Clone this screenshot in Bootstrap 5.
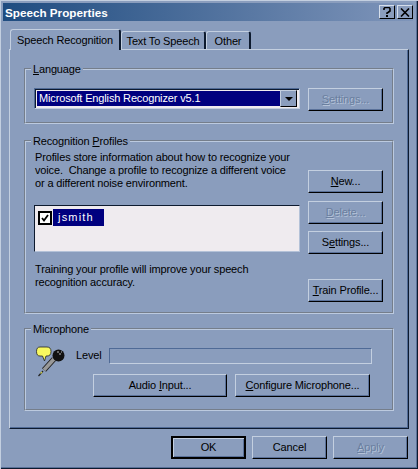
<!DOCTYPE html>
<html lang="en">
<head>
  <meta charset="UTF-8">
  <title>Speech Properties</title>
  <link href="https://cdn.jsdelivr.net/npm/bootstrap@5.3.0/dist/css/bootstrap.min.css" rel="stylesheet">
  <style>
    body {
      background: #8a9dbd;
      color: #000;
      font-family: "Liberation Sans", Arial, sans-serif;
      font-size: 11px;
      letter-spacing: -.15px;
      line-height: 13px;
      overflow: hidden;
    }
    .dlg-window {
      width: 418px;
      height: 469px;
      padding: 3px 5px 0 3px;
      background: #8a9dbd;
      box-shadow: inset 1px 1px 0 #c3cfe0, inset -1px -1px 0 #0d1a2e, inset -2px -2px 0 #5a7199;
    }
    .dlg-title {
      height: 18px;
      padding-left: 2px;
      background: linear-gradient(to right, #1f4c80, #7f95ba);
      color: #fff;
      font-size: 11.7px;
      letter-spacing: 0;
      font-weight: 700;
    }
    .cap-btn {
      width: 16px;
      height: 14px;
      padding: 0;
      margin-left: 2px;
      background: #8a9dbd;
      border: 1px solid;
      border-color: #d5deeb #000 #000 #d5deeb;
      line-height: 1;
    }
    .dlg-tabs {
      border: 0;
      margin: 8px 0 0 7px;
      height: 20px;
      align-items: flex-end;
    }
    .dlg-tabs .nav-link {
      height: 18px;
      margin: 0;
      padding: 3px 0 0 0;
      color: #000;
      background: #8a9dbd;
      border: 1px solid;
      border-width: 1px 2px 0 1px;
      border-color: #c3cfe0 #0d1a2e #8a9dbd #c3cfe0;
      border-radius: 3px 3px 0 0;
      font-size: 11px;
      line-height: 13px;
    }
    .dlg-tabs .nav-link.active {
      position: relative;
      z-index: 1;
      height: 21px;
      margin-bottom: -1px;
      padding-top: 4px;
      color: #000;
      background: #8a9dbd;
      border-color: #c3cfe0 #0d1a2e #8a9dbd #c3cfe0;
    }
    .tab-a { width: 111px; }
    .tab-b { width: 85px; }
    .tab-c { width: 45px; }
    .dlg-panel {
      width: 400px;
      height: 380px;
      margin-left: 6px;
      padding: 12px 14px 0 14px;
      border: 1px solid;
      border-color: #c3cfe0 #0d1a2e #0d1a2e #c3cfe0;
      box-shadow: inset -1px -1px 0 #4f6a96;
    }
    .dlg-group {
      min-width: 0;
      margin: 0;
      padding: 0 8px;
      border: 2px groove #bccadf;
    }
    .dlg-group legend {
      float: none;
      width: auto;
      margin: 0 0 0 -3px;
      padding: 0 2px;
      font-size: 11px;
      line-height: 14px;
    }
    .grp-lang { height: 62px; margin-bottom: 10px; }
    .grp-prof { height: 180px; margin-bottom: 8px; }
    .grp-mic { height: 89px; }
    .dlg-btn {
      width: 75px;
      height: 23px;
      padding: 0;
      background: #8a9dbd;
      color: #000;
      font-size: 11px;
      letter-spacing: -.15px;
      line-height: 13px;
      white-space: nowrap;
      border: 1px solid;
      border-color: #c3cfe0 #000 #000 #c3cfe0;
      border-radius: 0;
      box-shadow: inset -1px -1px 0 #5a7199;
    }
    .dlg-btn:disabled {
      opacity: 1;
      background: #8a9dbd;
      color: #6a7f9f;
      border-color: #c3cfe0 #000 #000 #c3cfe0;
      text-shadow: 1px 1px 0 #b4c2d8;
    }
    .dlg-btn.is-default {
      border: 2px solid #000;
      box-shadow: inset 1px 1px 0 #c3cfe0, inset -1px -1px 0 #5a7199;
    }
    .btn-wide-a { width: 134px; }
    .btn-wide-b { width: 135px; }
    .combo-box {
      width: 266px;
      height: 21px;
      padding: 2px;
      background: #efebef;
      border: 1px solid;
      border-color: #4f6a96 #c3cfe0 #c3cfe0 #4f6a96;
      box-shadow: inset 1px 1px 0 #0d1a2e;
    }
    .combo-text {
      height: 15px;
      padding: 1px 2px;
      background: #00007f;
      color: #fff;
      white-space: nowrap;
    }
    .combo-arrow {
      width: 17px;
      height: 17px;
      margin-top: -1px;
      background: #8a9dbd;
      border: 1px solid;
      border-color: #c3cfe0 #000 #000 #c3cfe0;
    }
    .prof-list {
      width: 266px;
      height: 47px;
      padding: 3px;
      background: #efebef;
      border: 1px solid;
      border-color: #0d1a2e #b4c2d8 #b4c2d8 #0d1a2e;
    }
    .prof-check {
      width: 14px;
      height: 14px;
      margin-top: 2px;
      margin-right: 1px;
      background: #fff;
      border: 2px solid #000;
    }
    .prof-name {
      width: 51px;
      height: 17px;
      padding: 2px 5px;
      background: #00007f;
      color: #fff;
      letter-spacing: 1.2px;
    }
    .level-bar {
      width: 263px;
      height: 16px;
      margin-top: 2px;
      border: 1px solid;
      border-color: #4f6a96 #c3cfe0 #c3cfe0 #4f6a96;
    }
    .grp-top-lang { padding-top: 12px; }
    .prof-text { padding: 3px 0 0 1px; height: 57px; margin: 0; white-space: nowrap; }
    .train-text { padding: 11px 0 0 1px; margin: 0; white-space: nowrap; }
    .prof-btns { padding-top: 22px; width: 75px; }
    .btn-gap-1 { margin-bottom: 8px; }
    .btn-gap-2 { margin-bottom: 7px; }
    .btn-gap-3 { margin-bottom: 25px; }
    .mic-row { padding-top: 10px; height: 38px; }
    .mic-label { margin: 3px 0 0 10px; width: 33px; }
    .mic-art { margin-left: 2px; flex-shrink: 0; }
    .mic-btns { padding-left: 59px; }
    .dlg-foot { width: 399px; margin: 7px 0 0 6px; gap: 6px; }
  </style>
</head>
<body class="m-0">
  <div class="dlg-window">
    <div class="dlg-title d-flex align-items-center">
      <span class="flex-grow-1">Speech Properties</span>
      <button class="cap-btn d-flex align-items-center justify-content-center" aria-label="Help">
        <svg width="8" height="10" viewBox="0 0 8 10"><path d="M1 3V1.5L2 .5H6L7 1.5V4L5 5.5L4 6V7" fill="none" stroke="#000" stroke-width="1.6"/><rect x="3" y="8" width="2" height="2"/></svg>
      </button>
      <button class="cap-btn d-flex align-items-center justify-content-center" aria-label="Close">
        <svg width="10" height="9" viewBox="0 0 10 9"><path d="M1 .5L9 8.5M9 .5L1 8.5" stroke="#000" stroke-width="1.6"/></svg>
      </button>
    </div>

    <ul class="nav nav-tabs dlg-tabs">
      <li class="nav-item"><a class="nav-link active tab-a text-center" href="#">Speech Recognition</a></li>
      <li class="nav-item"><a class="nav-link tab-b text-center" href="#">Text To Speech</a></li>
      <li class="nav-item"><a class="nav-link tab-c text-center" href="#">Other</a></li>
    </ul>

    <div class="dlg-panel">
      <fieldset class="dlg-group grp-lang">
        <legend><u>L</u>anguage</legend>
        <div class="d-flex gap-2 grp-top-lang">
          <div class="combo-box d-flex flex-shrink-0">
            <div class="combo-text flex-grow-1">Microsoft English Recognizer v5.1</div>
            <div class="combo-arrow d-flex align-items-center justify-content-center">
              <svg width="8" height="4" viewBox="0 0 8 4"><path d="M0 0H8L4 4Z"/></svg>
            </div>
          </div>
          <button class="btn dlg-btn" disabled><u>S</u>ettings...</button>
        </div>
      </fieldset>

      <fieldset class="dlg-group grp-prof">
        <legend>Recognition <u>P</u>rofiles</legend>
        <div class="d-flex gap-2">
          <div>
            <p class="prof-text">Profiles store information about how to recognize your<br>voice.&nbsp; Change a profile to recognize a different voice<br>or a different noise environment.</p>
            <div class="prof-list d-flex align-items-start">
              <div class="prof-check d-flex align-items-center justify-content-center">
                <svg width="8" height="8" viewBox="0 0 8 8"><path d="M1 4L3 6.5L7 1" fill="none" stroke="#000" stroke-width="1.8"/></svg>
              </div>
              <div class="prof-name">jsmith</div>
            </div>
            <p class="train-text">Training your profile will improve your speech<br>recognition accuracy.</p>
          </div>
          <div class="prof-btns d-flex flex-column">
            <button class="btn dlg-btn btn-gap-1"><u>N</u>ew...</button>
            <button class="btn dlg-btn btn-gap-2" disabled><u>D</u>elete...</button>
            <button class="btn dlg-btn btn-gap-3">S<u>e</u>ttings...</button>
            <button class="btn dlg-btn"><u>T</u>rain Profile...</button>
          </div>
        </div>
      </fieldset>

      <fieldset class="dlg-group grp-mic">
        <legend>Microphone</legend>
        <div class="mic-row d-flex align-items-start">
          <svg class="mic-art" width="30" height="31" viewBox="0 0 30 31">
            <path d="M4 1H11Q15 1 15 5.500Q15 10 11 10H10L8.500 15L6.500 10H4Q.5 10 .5 5.500Q.5 1 4 1Z" fill="#f8f860" stroke="#222" stroke-width=".8"/>
            <path d="M18 13L8 24" stroke="#222" stroke-width="5.500"/>
            <path d="M18 13L8 24" stroke="#999" stroke-width="3.500"/>
            <path d="M7 25L2.500 30" stroke="#222" stroke-width="1.200"/>
            <path d="M6 26L4.500 27.500" stroke="#c8c84a" stroke-width="1.200"/>
            <circle cx="22.500" cy="9.500" r="6" fill="#111"/>
            <path d="M21 6H23M25 6H26M23 8H25" stroke="#bbb" stroke-width="1.200"/>
          </svg>
          <span class="mic-label">Level</span>
          <div class="level-bar"></div>
        </div>
        <div class="mic-btns d-flex gap-2">
          <button class="btn dlg-btn btn-wide-a">Audio <u>I</u>nput...</button>
          <button class="btn dlg-btn btn-wide-b"><u>C</u>onfigure Microphone...</button>
        </div>
      </fieldset>
    </div>

    <div class="dlg-foot d-flex justify-content-end">
      <button class="btn dlg-btn is-default">OK</button>
      <button class="btn dlg-btn">Cancel</button>
      <button class="btn dlg-btn" disabled><u>A</u>pply</button>
    </div>
  </div>
</body>
</html>
